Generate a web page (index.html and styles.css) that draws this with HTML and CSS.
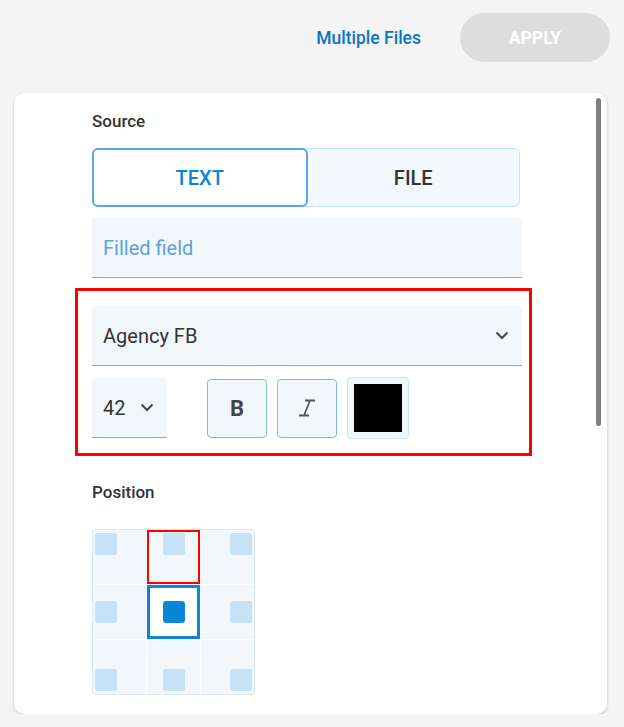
FILE: index.html
```html
<!DOCTYPE html>
<html>
<head>
    <title>Watermark Settings</title>
    <meta name="viewport" content="width=device-width, initial-scale=1.0">
    <link rel="stylesheet" href="styles.css">
</head>
<body>
    <header class="top-bar">
        <a href="#" class="multi-link">Multiple Files</a>
        <button class="apply-btn" disabled>APPLY</button>
    </header>

    <div class="card">
        <div class="scrollbar"></div>
        <div class="card-body">
            <div class="label">Source</div>
            <div class="tabs">
                <button class="tab tab-active">TEXT</button>
                <button class="tab">FILE</button>
            </div>
            <div class="field">Filled field</div>

            <div class="highlight">
                <div class="select select-font">
                    <span>Agency FB</span>
                    <svg class="chevron" width="14" height="9" viewBox="0 0 14 9"><path d="M1.5 1.5 L7 7 L12.5 1.5" fill="none" stroke="#444" stroke-width="2"/></svg>
                </div>
                <div class="font-row">
                    <div class="select select-size">
                        <span>42</span>
                        <svg class="chevron" width="14" height="9" viewBox="0 0 14 9"><path d="M1.5 1.5 L7 7 L12.5 1.5" fill="none" stroke="#444" stroke-width="2"/></svg>
                    </div>
                    <button class="style-btn style-bold">B</button>
                    <button class="style-btn">
                        <svg width="20" height="20" viewBox="0 0 20 20"><path d="M8 2.5 H18 M2 17.5 H12 M13 2.5 L7 17.5" fill="none" stroke="#555" stroke-width="1.8"/></svg>
                    </button>
                    <div class="color-btn"><div class="swatch"></div></div>
                </div>
            </div>

            <div class="label label-position">Position</div>
            <div class="pos-grid">
                <div class="cell top left"><span class="dot"></span></div>
                <div class="cell top center hover"><span class="dot"></span></div>
                <div class="cell top right"><span class="dot"></span></div>
                <div class="cell middle left"><span class="dot"></span></div>
                <div class="cell middle center selected"><span class="dot"></span></div>
                <div class="cell middle right"><span class="dot"></span></div>
                <div class="cell bottom left"><span class="dot"></span></div>
                <div class="cell bottom center"><span class="dot"></span></div>
                <div class="cell bottom right"><span class="dot"></span></div>
            </div>
        </div>
    </div>
</body>
</html>
```

FILE: styles.css
```css
body {
    font-family: Roboto, "Liberation Sans", sans-serif;
    background-color: #f4f4f4;
    margin: 0;
    padding: 0;
    color: #333;
}
button {
    font-family: inherit;
}
.top-bar {
    display: flex;
    justify-content: flex-end;
    align-items: center;
    gap: 39px;
    padding: 13px 14px 0 0;
}
.multi-link {
    color: #0a74c4;
    font-size: 17.5px;
    font-weight: 500;
    text-decoration: none;
}
.apply-btn {
    width: 150px;
    height: 49px;
    border: none;
    border-radius: 25px;
    background-color: #dddddd;
    color: white;
    font-size: 17.5px;
    font-weight: 700;
}
.card {
    position: relative;
    background-color: white;
    margin: 31px 17px 0 14px;
    height: 621px;
    border-radius: 10px;
    box-shadow: 0 1px 3px rgba(0, 0, 0, 0.22);
    overflow: hidden;
}
.scrollbar {
    position: absolute;
    top: 5px;
    right: 6px;
    width: 5px;
    height: 328px;
    border-radius: 3px;
    background-color: #808080;
}
.card-body {
    width: 430px;
    padding: 17px 0 0 78px;
}
.label {
    font-size: 17px;
    font-weight: 500;
    line-height: 22px;
    margin-bottom: 16px;
}
.tabs {
    display: flex;
    width: 428px;
    height: 59px;
    border: 1px solid #c5e2f7;
    border-radius: 6px;
    background-color: #f2f8fd;
    box-sizing: border-box;
}
.tab {
    flex: 1;
    border: none;
    background: none;
    font-size: 20px;
    font-weight: 500;
    color: #333;
}
.tab-active {
    margin: -1px 0 -1px -1px;
    border: 2px solid #52a9e6;
    border-radius: 6px;
    background-color: white;
    color: #0a86d8;
}
.field {
    margin-top: 11px;
    height: 60px;
    box-sizing: border-box;
    padding: 0 11px;
    display: flex;
    align-items: center;
    background-color: #f2f7fc;
    border-bottom: 1px solid #7ab6e0;
    font-size: 20px;
    color: #5ba3db;
}
.highlight {
    margin: 10px -10px 0 -17px;
    padding: 15px 7px 14px 14px;
    border: 3px solid #ff0000;
}
.select {
    display: flex;
    align-items: center;
    justify-content: space-between;
    box-sizing: border-box;
    background-color: #f2f7fc;
    border-bottom: 1px solid #6fb3e6;
    border-radius: 4px 4px 0 0;
    font-size: 20px;
    color: #333;
}
.select-font {
    height: 60px;
    padding: 0 13px 0 11px;
}
.select-size {
    width: 75px;
    height: 60px;
    padding: 0 13px 0 11px;
}
.font-row {
    display: flex;
    align-items: center;
    margin-top: 11px;
}
.style-btn {
    width: 60px;
    height: 59px;
    margin-left: 10px;
    display: flex;
    align-items: center;
    justify-content: center;
    border: 1px solid #7ab8e6;
    border-radius: 4px;
    background-color: #f2f7fc;
    padding: 0;
}
.style-btn:first-of-type {
    margin-left: 40px;
}
.style-bold {
    font-size: 22px;
    font-weight: 700;
    color: #444;
}
.color-btn {
    margin-left: 10px;
    padding: 6px;
    border: 1px solid #c8e2f7;
    border-radius: 4px;
    background-color: #f2f7fc;
}
.swatch {
    width: 48px;
    height: 48px;
    background-color: black;
}
.label-position {
    margin-top: 25px;
    margin-bottom: 26px;
}
.pos-grid {
    display: grid;
    grid-template-columns: repeat(3, 53px);
    grid-template-rows: repeat(3, 54px);
    gap: 1px;
    width: 161px;
    border: 1px solid #d5e9f8;
    border-radius: 4px;
    background-color: white;
    overflow: hidden;
}
.cell {
    display: flex;
    padding: 3px 2px;
    background-color: #f2f7fc;
}
.cell.top { align-items: flex-start; }
.cell.middle { align-items: center; }
.cell.bottom { align-items: flex-end; }
.cell.left { justify-content: flex-start; }
.cell.center { justify-content: center; }
.cell.right { justify-content: flex-end; }
.dot {
    width: 22px;
    height: 22px;
    border-radius: 3px;
    background-color: #c5e2f6;
}
.cell.hover {
    box-shadow: inset 0 0 0 2px #ff0000;
}
.cell.selected {
    background-color: white;
    box-shadow: inset 0 0 0 3px #0a86d8;
}
.cell.selected .dot {
    background-color: #0a86d8;
}
```
